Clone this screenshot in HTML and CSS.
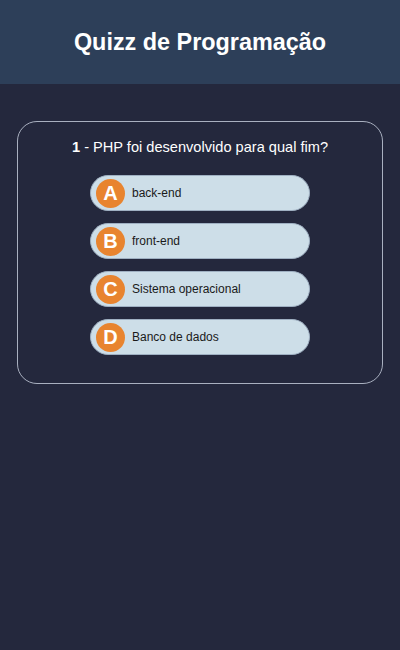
FILE: index.html
```html
<!DOCTYPE html>
<html lang="pt">
<head>
<meta charset="utf-8">
<title>Quizz de Programação</title>
<link rel="stylesheet" href="styles.css">
</head>
<body>
<header class="topbar">
  <h1 class="title">Quizz de Programação</h1>
</header>
<main class="content">
  <section class="card">
    <p class="question"><strong>1</strong> - PHP foi desenvolvido para qual fim?</p>
    <div class="answers">
      <button class="answer"><span class="letter">A</span><span class="label">back-end</span></button>
      <button class="answer"><span class="letter">B</span><span class="label">front-end</span></button>
      <button class="answer"><span class="letter">C</span><span class="label">Sistema operacional</span></button>
      <button class="answer"><span class="letter">D</span><span class="label">Banco de dados</span></button>
    </div>
  </section>
</main>
</body>
</html>
```
FILE: styles.css
```css
* { box-sizing: border-box; }
html, body {
  margin: 0;
  height: 100%;
}
body {
  background: #24283d;
  font-family: "Liberation Sans", Arial, sans-serif;
  color: #fff;
}
.topbar {
  height: 84px;
  background: #2d3f59;
  display: flex;
  align-items: center;
  justify-content: center;
}
.title {
  margin: 0;
  font-size: 23.4px;
  font-weight: bold;
  color: #fff;
}
.content {
  padding-top: 37px;
}
.card {
  width: 366px;
  margin: 0 auto;
  border: 1px solid #a9b0c0;
  border-radius: 20px;
  padding: 17px 0 28px;
}
.question {
  margin: 0;
  text-align: center;
  font-size: 14.6px;
  color: #fff;
}
.answers {
  margin-top: 20px;
  display: flex;
  flex-direction: column;
  align-items: center;
  gap: 12px;
}
.answer {
  width: 220px;
  height: 36px;
  border: 1px solid #9fb0c2;
  border-radius: 18px;
  background: #cddee8;
  display: flex;
  align-items: center;
  padding: 0 0 0 5px;
  gap: 7px;
  font-family: "Liberation Sans", Arial, sans-serif;
  cursor: pointer;
}
.letter {
  width: 29px;
  height: 29px;
  border-radius: 50%;
  background: #e8842f;
  color: #fff;
  font-weight: bold;
  font-size: 20px;
  display: flex;
  align-items: center;
  justify-content: center;
  flex-shrink: 0;
}
.label {
  font-size: 12px;
  color: #1a1a1a;
}
```
